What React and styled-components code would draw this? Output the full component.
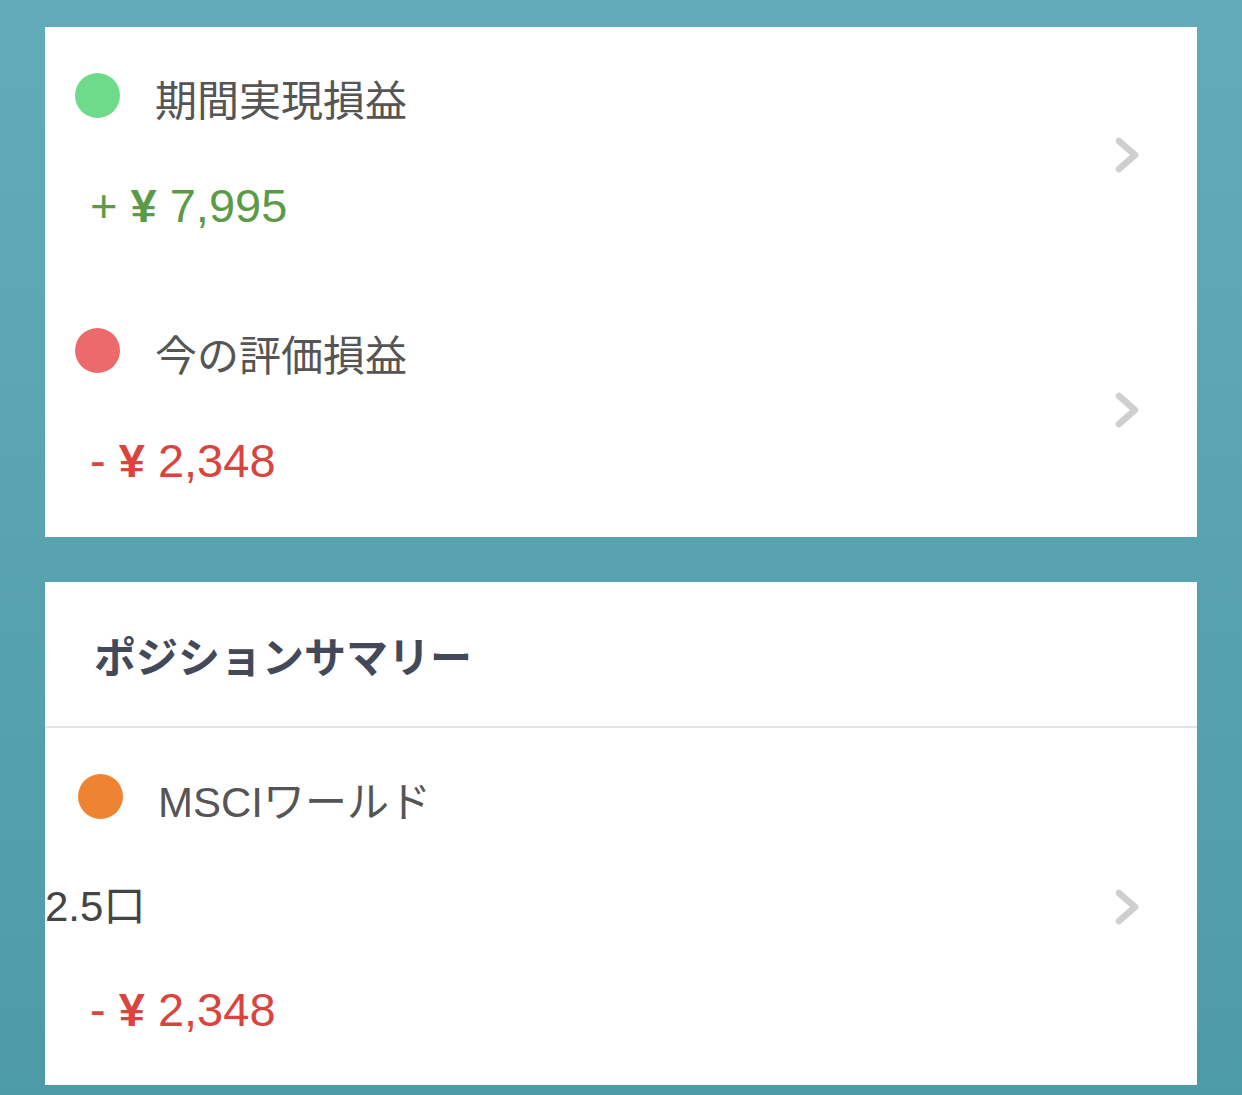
import React from 'react';
import styled, { createGlobalStyle } from 'styled-components';

const GlobalStyle = createGlobalStyle`
  html, body {
    margin: 0;
    padding: 0;
  }
  body {
    font-family: "Liberation Sans", "Noto Sans CJK JP", sans-serif;
  }
`;

const Page = styled.div`
  min-height: 100vh;
  box-sizing: border-box;
  padding: 27px 45px 10px;
  background: linear-gradient(180deg, #64abb9 0%, #4e9ba8 100%);
  display: flex;
  flex-direction: column;
  gap: 45px;
`;

const Card = styled.section`
  background: #fff;
`;

const Row = styled.div`
  display: grid;
  grid-template-columns: 1fr auto;
  align-items: center;
  height: ${(p) => p.height}px;
  padding-right: 56px;
  box-sizing: border-box;
`;

const Body = styled.div`
  display: flex;
  flex-direction: column;
  align-self: start;
  padding-top: ${(p) => p.top}px;
`;

const TitleLine = styled.div`
  display: flex;
  align-items: center;
  gap: 35px;
  height: 45px;
  padding-left: ${(p) => p.indent}px;
`;

const Dot = styled.span`
  width: 45px;
  height: 45px;
  border-radius: 50%;
  background: ${(p) => p.color};
  flex: none;
`;

const Label = styled.span`
  font-size: 42px;
  color: #555;
  line-height: 1;
  position: relative;
  top: ${(p) => p.shift || 0}px;
`;

const Units = styled.div`
  font-size: 42px;
  color: #444;
  line-height: 60px;
  margin-top: 58px;
`;

const Amount = styled.div`
  font-size: 47px;
  line-height: 60px;
  color: ${(p) => (p.negative ? '#d9443e' : '#5b9b48')};
  padding-left: 45px;
  margin-top: ${(p) => p.gap}px;
  white-space: pre;
`;

const Yen = styled.b`
  font-weight: 700;
`;

const Header = styled.h2`
  margin: 0;
  height: 144px;
  display: flex;
  align-items: center;
  padding-left: 49px;
  font-size: 42px;
  font-weight: 700;
  color: #434959;
  border-bottom: 2px solid #e3e3e3;
`;

const Chevron = () => (
  <svg width="30" height="40" viewBox="0 0 30 40">
    <path d="M8 6 L24 20 L8 34" fill="none" stroke="#cfcfcf" strokeWidth="6.5" strokeLinecap="round" strokeLinejoin="round" />
  </svg>
);

const App = () => (
  <>
    <GlobalStyle />
    <Page>
      <Card>
        <Row height={255}>
          <Body top={46}>
            <TitleLine indent={30}>
              <Dot color="#6edb8a" />
              <Label shift={6}>期間実現損益</Label>
            </TitleLine>
            <Amount gap={58}>+ <Yen>¥</Yen> 7,995</Amount>
          </Body>
          <Chevron />
        </Row>
        <Row height={255}>
          <Body top={46}>
            <TitleLine indent={30}>
              <Dot color="#ec6a6c" />
              <Label shift={6}>今の評価損益</Label>
            </TitleLine>
            <Amount negative gap={58}>- <Yen>¥</Yen> 2,348</Amount>
          </Body>
          <Chevron />
        </Row>
      </Card>
      <Card>
        <Header>ポジションサマリー</Header>
        <Row height={357}>
          <Body top={46}>
            <TitleLine indent={33}>
              <Dot color="#ee8431" />
              <Label shift={6}>MSCIワールド</Label>
            </TitleLine>
            <Units>2.5口</Units>
            <Amount negative gap={43}>- <Yen>¥</Yen> 2,348</Amount>
          </Body>
          <Chevron />
        </Row>
      </Card>
    </Page>
  </>
);

export default App;
